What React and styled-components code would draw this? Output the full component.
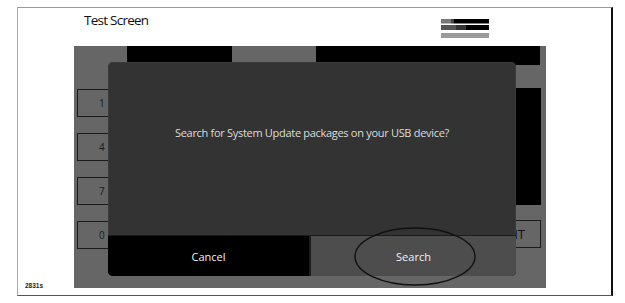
import styled, { createGlobalStyle } from 'styled-components';

const GlobalStyle = createGlobalStyle`
  html, body {
    margin: 0;
    padding: 0;
    background: #ffffff;
  }
  body {
    font-family: 'Open Sans', 'Liberation Sans', sans-serif;
  }
`;

const Frame = styled.div`
  box-sizing: border-box;
  margin: 7px 0 0 17px;
  width: 596px;
  height: 289px;
  border-top: 1px solid #9a9a9a;
  border-left: 1px solid #acacac;
  border-right: 2px solid #111111;
  border-bottom: 1px solid #555555;
  display: grid;
  grid-template-columns: 56px 472px 1fr;
  grid-template-rows: 38px 242px 1fr;
`;

const Header = styled.div`
  grid-column: 2 / 3;
  grid-row: 1 / 2;
  display: flex;
  justify-content: space-between;
  align-items: flex-start;
  padding: 0 57px 0 10px;
`;

const Title = styled.div`
  margin-top: 5px;
  font-size: 13.5px;
  line-height: 14px;
  color: #111111;
  letter-spacing: -0.75px;
`;

const StatusIcon = styled.svg`
  display: block;
  margin-top: 11px;
`;

const FigureLabel = styled.div`
  grid-column: 1 / 2;
  grid-row: 2 / 4;
  align-self: end;
  padding: 0 0 6px 7px;
  font-family: 'Liberation Sans', Arial, sans-serif;
  font-size: 6.5px;
  font-weight: 700;
  color: #222222;
`;

const Screen = styled.div`
  grid-column: 2 / 3;
  grid-row: 2 / 3;
  position: relative;
  overflow: hidden;
  background: #666666;
  padding: 0 5px 0 3px;
  display: flex;
  flex-direction: column;
`;

const TopRow = styled.div`
  display: flex;
  height: 19px;
`;

const TopBar = styled.div`
  background: #000000;
  height: 100%;
  width: ${(p) => p.$width}px;
  margin-left: ${(p) => p.$offset}px;
`;

const Body = styled.div`
  display: flex;
  justify-content: space-between;
`;

const Keypad = styled.div`
  margin-top: 24px;
  display: flex;
  flex-direction: column;
  gap: 16px;
`;

const Key = styled.div`
  box-sizing: border-box;
  width: 60px;
  height: 28px;
  border: 1px solid #1a1a1a;
  display: flex;
  align-items: center;
  padding-left: 21px;
  font-size: 10px;
  color: #1a1a1a;
`;

const SideColumn = styled.div`
  margin-top: 23px;
  display: flex;
  flex-direction: column;
  align-items: flex-end;
  gap: 15px;
`;

const SideBlock = styled.div`
  width: 80px;
  height: 117px;
  background: #000000;
`;

const SideButton = styled.div`
  box-sizing: border-box;
  width: 80px;
  height: 28px;
  border: 1px solid #1a1a1a;
  display: flex;
  align-items: center;
  justify-content: flex-end;
  padding-right: 15px;
  font-size: 13px;
  color: #111111;
`;

const Dialog = styled.div`
  position: absolute;
  left: 34px;
  top: 16px;
  width: 408px;
  height: 214px;
  background: #333333;
  border-radius: 5px;
  overflow: hidden;
  display: flex;
  flex-direction: column;
  box-shadow: inset 0 0 0 1px #3a3a3a;
`;

const Message = styled.div`
  flex: 1;
  padding-top: 64px;
  text-align: center;
  font-size: 11px;
  line-height: 14px;
  color: #dddddd;
  letter-spacing: -0.3px;
`;

const ButtonRow = styled.div`
  height: 40px;
  border-top: 1px solid #1c1c1c;
  background: #1c1c1c;
  display: grid;
  grid-template-columns: 201px 1fr;
  gap: 2px;
`;

const DialogButton = styled.div`
  display: flex;
  align-items: center;
  justify-content: center;
  font-size: 11px;
  color: #f2f2f2;
  background: ${(p) => (p.$primary ? '#4d4d4d' : '#000000')};
`;

const Marker = styled.svg`
  position: absolute;
  left: 280px;
  top: 181px;
`;

export default function App() {
  return (
    <>
      <GlobalStyle />
      <Frame>
        <Header>
          <Title>Test Screen</Title>
          <StatusIcon width="48" height="19" viewBox="0 0 48 19">
            <rect x="0" y="0" width="10" height="4.5" fill="#777" />
            <rect x="10" y="0" width="3" height="4.5" fill="#444" />
            <rect x="13" y="0" width="35" height="4.5" fill="#000" />
            <rect x="0" y="6" width="15" height="5" fill="#555" />
            <rect x="15" y="6" width="10" height="5" fill="#333" />
            <rect x="25" y="6" width="23" height="5" fill="#000" />
            <rect x="0" y="14" width="48" height="5" fill="#9a9a9a" />
          </StatusIcon>
        </Header>

        <Screen>
          <TopRow>
            <TopBar $offset={50} $width={105} />
            <TopBar $offset={84} $width={224} />
          </TopRow>
          <Body>
            <Keypad>
              {['1', '4', '7', '0'].map((n) => (
                <Key key={n}>{n}</Key>
              ))}
            </Keypad>
            <SideColumn>
              <SideBlock />
              <SideButton>EXIT</SideButton>
            </SideColumn>
          </Body>

          <Dialog>
            <Message>Search for System Update packages on your USB device?</Message>
            <ButtonRow>
              <DialogButton>Cancel</DialogButton>
              <DialogButton $primary>Search</DialogButton>
            </ButtonRow>
          </Dialog>

          <Marker width="122" height="59" viewBox="0 0 122 59">
            <ellipse cx="61" cy="29.5" rx="60" ry="28.5" fill="none" stroke="#111" strokeWidth="1.4" />
          </Marker>
        </Screen>

        <FigureLabel>2831s</FigureLabel>
      </Frame>
    </>
  );
}
